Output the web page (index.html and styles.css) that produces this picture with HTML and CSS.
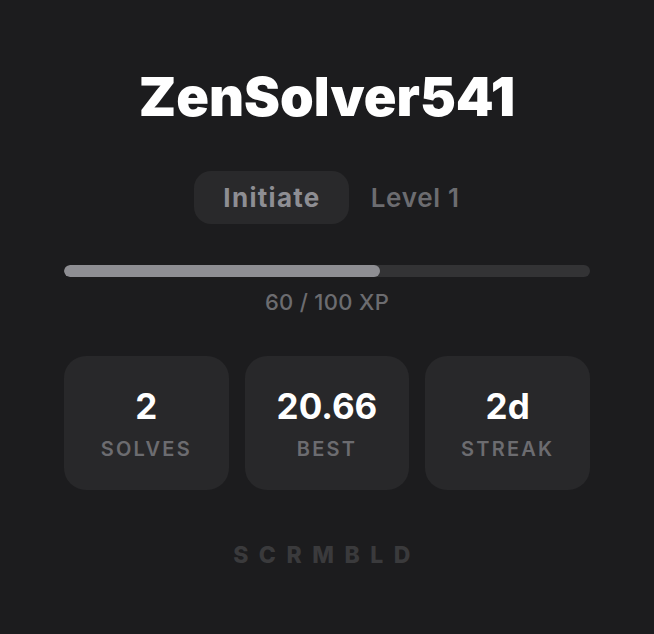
FILE: index.html
```html
<!DOCTYPE html>
<html>
<head>
<meta charset="utf-8">
<link rel="stylesheet" href="styles.css">
</head>
<body>
<main class="profile">
  <h1 class="name">ZenSolver541</h1>
  <div class="rank">
    <span class="rank-pill">Initiate</span>
    <span class="rank-level">Level 1</span>
  </div>
  <div class="xp">
    <div class="xp-track"><div class="xp-fill" style="width:60%"></div></div>
    <div class="xp-text">60 / 100 XP</div>
  </div>
  <div class="stats">
    <div class="stat"><div class="stat-value">2</div><div class="stat-label">SOLVES</div></div>
    <div class="stat"><div class="stat-value">20.66</div><div class="stat-label">BEST</div></div>
    <div class="stat"><div class="stat-value">2d</div><div class="stat-label">STREAK</div></div>
  </div>
  <div class="brand">SCRMBLD</div>
</main>
</body>
</html>
```
FILE: styles.css
```css
html, body {
  margin: 0;
  padding: 0;
  background: #1c1c1e;
  height: 100%;
}
body {
  font-family: Inter, "Noto Sans", sans-serif;
  color: #fff;
}
.profile {
  width: 526px;
  margin: 0 auto;
  padding-top: 61px;
  display: flex;
  flex-direction: column;
  align-items: center;
}
.name {
  margin: 0;
  font-size: 54px;
  font-weight: 900;
  letter-spacing: 0;
  line-height: 72px;
}
.rank {
  margin-top: 38px;
  display: flex;
  align-items: center;
  gap: 22px;
}
.rank-pill {
  background: #29292b;
  border-radius: 17px;
  height: 53px;
  padding: 0 28px 0 29px;
  display: flex;
  align-items: center;
  font-size: 26px;
  font-weight: 700;
  letter-spacing: 1.3px;
  color: #8e8e93;
}
.rank-level {
  font-size: 26px;
  font-weight: 600;
  letter-spacing: 0.7px;
  color: #6c6c70;
}
.xp {
  align-self: stretch;
  margin-top: 41px;
}
.xp-track {
  height: 12px;
  border-radius: 6px;
  background: #333335;
  overflow: hidden;
}
.xp-fill {
  height: 100%;
  background: #8e8e93;
  border-radius: 6px;
}
.xp-text {
  text-align: center;
  margin-top: 12px;
  font-size: 22px;
  line-height: 26px;
  font-weight: 500;
  color: #6c6c70;
  letter-spacing: 0.3px;
}
.stats {
  align-self: stretch;
  margin-top: 41px;
  display: grid;
  grid-template-columns: repeat(3, 1fr);
  gap: 16px;
}
.stat {
  background: #28282a;
  border-radius: 22px;
  height: 134px;
  display: flex;
  flex-direction: column;
  align-items: center;
  justify-content: center;
}
.stat-value {
  font-size: 35px;
  font-weight: 700;
  line-height: 42px;
}
.stat-label {
  margin-top: 10px;
  font-size: 20px;
  line-height: 24px;
  font-weight: 600;
  letter-spacing: 2.2px;
  color: #6c6c70;
}
.brand {
  margin-top: 51px;
  font-size: 23px;
  line-height: 28px;
  font-weight: 800;
  letter-spacing: 10.5px;
  color: #3a3a3c;
}
```
